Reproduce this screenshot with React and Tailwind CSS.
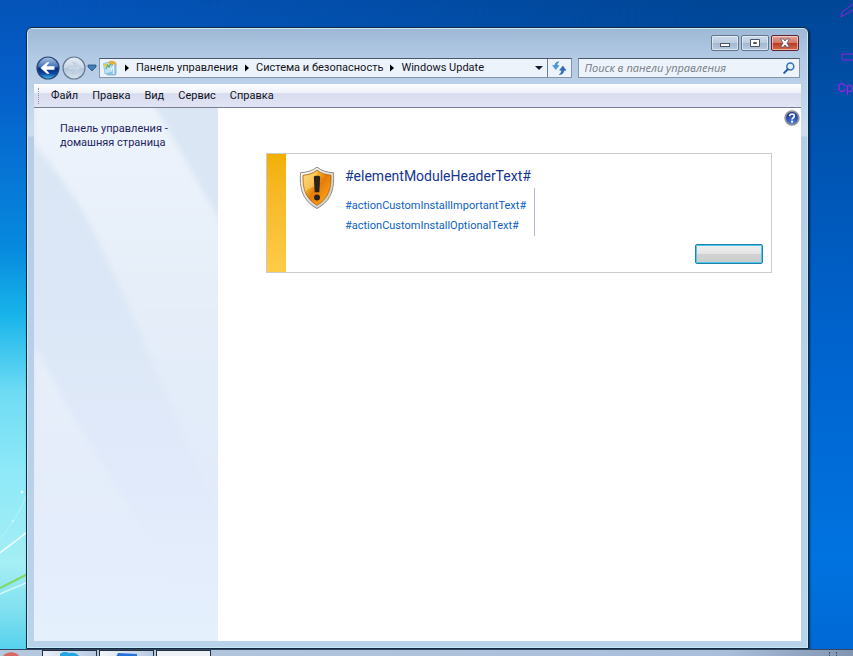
import React, { useState } from 'react';

const menuItems = ['Файл', 'Правка', 'Вид', 'Сервис', 'Справка'];
const crumbs = ['Панель управления', 'Система и безопасность', 'Windows Update'];

const Wallpaper = () => (
  <div className="absolute inset-0 bg-[linear-gradient(180deg,#004696_0%,#0052ae_20%,#0062cc_50%,#0073e0_85%,#0068d4_100%)]">
    <div className="absolute inset-0 bg-[linear-gradient(180deg,#0453b8_0%,#0561cb_15%,#078ade_38%,#18b4ea_48%,#6fdcf4_60%,#8ee9f8_72%,#a5eef5_86%,#7fe0f0_93%,#4fcfec_100%)] [mask-image:linear-gradient(90deg,#000_0%,#000_6%,transparent_85%)]" />
    <svg className="absolute bottom-0 left-0 h-44 w-7" viewBox="0 0 28 176" fill="none" aria-hidden="true">
      <path d="M0 59C10 47 20 32 28 12" stroke="#c8f8fc" strokeOpacity="0.6" />
      <path d="M0 73C10 65 19 59 28 51" stroke="#effeff" strokeWidth="1.5" />
      <path d="M0 108C10 103 18 99 28 94" stroke="#7fd860" strokeWidth="2" />
      <path d="M0 114C10 109 18 107 28 102" stroke="#d3f8fa" strokeWidth="1.5" />
      <circle cx="22" cy="12" r="1.5" fill="#e6fdff" />
      <circle cx="13" cy="41" r="1" fill="#d8fbff" />
    </svg>
  </div>
);

const DesktopShortcut = () => (
  <a href="#shortcut" className="absolute right-0 top-0 block w-4 text-[13px] text-[#a01ee0]">
    <svg className="h-20 w-4" viewBox="0 0 16 80" fill="none" stroke="#8a22d8" aria-hidden="true">
      <path d="M16 4L5 12L4 17L16 10" />
      <path d="M16 54H5V60H16" />
    </svg>
    <span className="block leading-4">Ср</span>
  </a>
);

const BackIcon = () => (
  <svg className="size-6" viewBox="0 0 24 24" aria-hidden="true">
    <defs>
      <linearGradient id="back" x1="0" y1="0" x2="0" y2="1">
        <stop offset="0" stopColor="#a9c3e6" />
        <stop offset="0.45" stopColor="#4270ba" />
        <stop offset="0.5" stopColor="#082c7c" />
        <stop offset="0.75" stopColor="#0d489f" />
        <stop offset="1" stopColor="#43c5f0" />
      </linearGradient>
    </defs>
    <circle cx="12" cy="12" r="11" fill="url(#back)" stroke="#2b4574" strokeWidth="1.2" />
    <path d="M4.5 12L11 6.2H13.6L10.2 10.2H18.5V13.8H10.2L13.6 17.8H11Z" fill="#fff" />
  </svg>
);

const ForwardIcon = () => (
  <svg className="size-6" viewBox="0 0 24 24" aria-hidden="true">
    <defs>
      <linearGradient id="forward" x1="0" y1="0" x2="0" y2="1">
        <stop offset="0" stopColor="#e4ecf5" />
        <stop offset="0.48" stopColor="#cbd8e7" />
        <stop offset="0.52" stopColor="#b3c6db" />
        <stop offset="1" stopColor="#d7e4f0" />
      </linearGradient>
    </defs>
    <circle cx="12" cy="12" r="11" fill="url(#forward)" stroke="#66788f" strokeWidth="1.2" />
    <path d="M19 12L13 6.5H10.6L14 10.3H6V13.7H14L10.6 17.5H13Z" fill="#c9d7e7" stroke="#b0c1d5" strokeWidth="0.6" />
  </svg>
);

const PanelIcon = () => (
  <svg className="size-4 shrink-0" viewBox="0 0 16 16" aria-hidden="true">
    <rect x="5" y="4" width="9" height="11" rx="1" fill="#8ec6ec" stroke="#70a8d2" strokeWidth="0.7" />
    <path d="M1.5 3.5L9 1.5L11 12L3 14Z" fill="#bfe3f2" stroke="#7ab6cf" strokeWidth="0.7" />
    <path d="M4 9L5.5 5L7 7L9 3" fill="none" stroke="#58aa6c" strokeWidth="1.2" />
    <path d="M6 2.5C9 0 13 0 15 4.5L12.5 5.5C11 3.5 9 3.2 7.5 4.5Z" fill="#e2b040" />
    <path d="M9 10L11.5 6V14" fill="none" stroke="#e8f6ff" strokeWidth="1.3" />
    <circle cx="3.5" cy="5" r="1.6" fill="#ecc83c" />
  </svg>
);

const RefreshIcon = () => (
  <svg className="size-4" viewBox="0 0 16 16" aria-hidden="true">
    <path d="M8 1.8C5.2 2 4 3.3 3.8 5.5H1.6L4.8 9.6L8 5.5H6C6 4 6.6 2.8 8 1.8Z" fill="#4a9fd8" stroke="#2e7fbd" strokeWidth="0.5" />
    <path d="M8.2 14.6C11.6 14.4 12.8 12.8 12.9 10.3H15L11.8 6L8.6 10.3H10.7C10.6 12 9.8 13.6 8.2 14.6Z" fill="#2e6fc0" stroke="#1f549f" strokeWidth="0.5" />
  </svg>
);

const SearchIcon = () => (
  <svg className="size-3" viewBox="0 0 12 12" fill="none" aria-hidden="true">
    <circle cx="7.3" cy="4.5" r="3.5" fill="#e2f0fc" stroke="#3472b4" strokeWidth="1.5" />
    <path d="M4.8 7.2L1.2 10.9" stroke="#24599c" strokeWidth="2" strokeLinecap="round" />
  </svg>
);

const HelpIcon = () => (
  <svg className="size-4" viewBox="0 0 16 16" aria-hidden="true">
    <defs>
      <radialGradient id="help" cx="0.5" cy="0.85" r="0.8">
        <stop offset="0" stopColor="#4f80e4" />
        <stop offset="1" stopColor="#172a86" />
      </radialGradient>
    </defs>
    <circle cx="8" cy="8" r="6.8" fill="url(#help)" stroke="#8f949f" strokeWidth="1.8" />
    <path d="M5.7 6.2C5.7 3.3 10.4 3.3 10.4 6C10.4 7.7 8.1 7.7 8.1 9.4" fill="none" stroke="#fff" strokeWidth="1.7" />
    <circle cx="8.1" cy="11.7" r="1.1" fill="#fff" />
  </svg>
);

const ShieldIcon = () => (
  <svg className="h-11 w-9 shrink-0" viewBox="0 0 36 44" aria-hidden="true">
    <defs>
      <linearGradient id="shield" x1="0" y1="0" x2="1" y2="1">
        <stop offset="0" stopColor="#ffd261" />
        <stop offset="0.35" stopColor="#f6a821" />
        <stop offset="0.5" stopColor="#e47c08" />
        <stop offset="0.75" stopColor="#f59512" />
        <stop offset="1" stopColor="#ffd047" />
      </linearGradient>
      <linearGradient id="rim" x1="0" y1="0" x2="1" y2="1">
        <stop offset="0" stopColor="#fff" />
        <stop offset="1" stopColor="#c4c2bd" />
      </linearGradient>
    </defs>
    <path d="M18 1.2C13 5 8 6.4 1.6 6.7C.4 22 3.2 34.5 18 42.5C32.8 34.5 35.6 22 34.4 6.7C28 6.4 23 5 18 1.2Z" fill="url(#rim)" stroke="#8f8b85" />
    <path d="M18 4.2C13.4 7.6 9 8.8 4 9.2C3.6 22 6 32.2 18 39.3C30 32.2 32.4 22 32 9.2C27 8.8 22.6 7.6 18 4.2Z" fill="url(#shield)" stroke="#a9680f" strokeWidth="0.8" />
    <path d="M5 10C10 9.6 14 8.4 18 5.3V20C12 21 8 23.6 6.3 26C5 21 4.7 15.5 5 10Z" fill="#fff3bd" fillOpacity="0.35" />
    <path d="M14.8 11C14.8 9.2 21.2 9.2 21.2 11L20.3 26.3H15.7Z" fill="#2a221b" />
    <circle cx="18" cy="31.6" r="3" fill="#2a221b" />
  </svg>
);

const CaptionButton = ({ label, danger, children }) => (
  <button
    type="button"
    aria-label={label}
    className={`flex h-4 w-7 items-center justify-center rounded-xs border shadow-[inset_0_0_0_1px_#ffffff80] ${
      danger
        ? 'border-[#5b2430] bg-[linear-gradient(180deg,#e3a196_0%,#d17768_48%,#bd3a25_52%,#d46a4b_100%)]'
        : 'border-[#62758f] bg-[linear-gradient(180deg,#ccdaea_0%,#bccde0_48%,#a3b8d0_52%,#b8cce1_100%)]'
    }`}
  >
    <svg className="h-2.5 w-3" viewBox="0 0 12 10" fill="#fff" stroke="#4b5566" aria-hidden="true">
      {children}
    </svg>
  </button>
);

const TitleBar = () => (
  <div className="flex h-6 items-end justify-end gap-0.5 pb-px pr-0.5">
    <CaptionButton label="Свернуть">
      <rect x="1.5" y="5.5" width="9" height="3" />
    </CaptionButton>
    <CaptionButton label="Развернуть">
      <path d="M1.5 1.5H10.5V8.5H1.5ZM4.5 4.5V5.5H7.5V4.5Z" fillRule="evenodd" />
    </CaptionButton>
    <CaptionButton label="Закрыть" danger>
      <path d="M1.5 1H4.5L6 3L7.5 1H10.5L8 5L10.5 9H7.5L6 7L4.5 9H1.5L4 5Z" strokeWidth="0.8" />
    </CaptionButton>
  </div>
);

const AddressBar = () => {
  const [query, setQuery] = useState('');

  return (
    <div className="flex h-8 items-center pl-0.5 pr-px">
      <button type="button" aria-label="Назад"><BackIcon /></button>
      <button type="button" aria-label="Вперед" className="ml-0.5"><ForwardIcon /></button>
      <button type="button" aria-label="Последние страницы" className="flex w-3.25 justify-end pr-0.5">
        <svg className="h-2 w-2.5" viewBox="0 0 10 8" aria-hidden="true">
          <path d="M1 1H9V3L5 7L1 3Z" fill="#3d7fb8" stroke="#24507f" strokeWidth="0.8" />
        </svg>
      </button>
      <div className="flex h-5 min-w-0 flex-[69] items-center border border-[#8794a8] border-t-[#4b5566] bg-[#edf3fa] pl-0.5">
        <PanelIcon />
        {crumbs.map((crumb) => (
          <React.Fragment key={crumb}>
            <svg className="h-2 w-4.5 shrink-0" viewBox="0 0 18 8" aria-hidden="true">
              <path d="M7 0.5L11 4L7 7.5Z" fill="#000" />
            </svg>
            <a href="#crumb" className="whitespace-nowrap">{crumb}</a>
          </React.Fragment>
        ))}
        <button type="button" aria-label="Предыдущие расположения" className="ml-auto flex h-full w-4 items-center justify-center">
          <svg className="h-1.5 w-2" viewBox="0 0 8 6" aria-hidden="true">
            <path d="M0 1H8L4 5Z" fill="#131b33" />
          </svg>
        </button>
        <button type="button" aria-label="Обновить" className="flex h-full w-6 items-center justify-center border-l border-[#6f7c90]">
          <RefreshIcon />
        </button>
      </div>
      <div className="ml-1.5 flex h-5 min-w-0 flex-[31] items-center border border-[#8794a8] border-t-[#4b5566] bg-[#edf3fa] pl-1.5 pr-1">
        <input
          type="text"
          aria-label="Поиск в панели управления"
          value={query}
          onChange={(e) => setQuery(e.target.value)}
          placeholder="Поиск в панели управления"
          className="min-w-0 flex-1 bg-transparent font-['Open_Sans',sans-serif] placeholder:italic placeholder:text-[#747a84] focus:outline-none"
        />
        <button type="button" aria-label="Найти"><SearchIcon /></button>
      </div>
    </div>
  );
};

const MenuBar = () => (
  <nav className="flex h-6 shrink-0 items-center border-b border-[#777f96] bg-[linear-gradient(180deg,#ffffff_0%,#eff1fa_38%,#d8dcef_42%,#e0e4f3_100%)] pl-1">
    <span className="h-4 border-l border-dotted border-[#8d94a8]" />
    <div className="flex gap-3.5 pl-3 pt-0.5">
      {menuItems.map((item) => (
        <button type="button" key={item}>{item}</button>
      ))}
    </div>
  </nav>
);

const Sidebar = () => (
  <aside className="relative w-46 shrink-0 bg-[linear-gradient(180deg,#dae6f4_0%,#dbe7f6_35%,#e1eafa_70%,#e5f0fd_100%)]">
    <svg className="absolute inset-0 size-full" viewBox="0 0 184 533" preserveAspectRatio="none" aria-hidden="true">
      <defs>
        <linearGradient id="sheen" x1="0" y1="0" x2="0" y2="1">
          <stop offset="0" stopColor="#f7faff" stopOpacity="0.7" />
          <stop offset="0.45" stopColor="#f2f7fc" stopOpacity="0.45" />
          <stop offset="1" stopColor="#f2f7fc" stopOpacity="0" />
        </linearGradient>
        <filter id="soften">
          <feGaussianBlur stdDeviation="3" />
        </filter>
      </defs>
      <g fill="url(#sheen)" filter="url(#soften)">
        <path d="M0 -6H118L150 50L190 120V420C150 330 110 230 70 145C45 90 20 60 0 36Z" />
        <path d="M0 238L40 310L95 400L140 480H0Z" fillOpacity="0.6" />
      </g>
    </svg>
    <a href="#home" className="relative ml-6.5 mt-3.5 block w-32 leading-3.5 text-[#1d2462]">
      Панель управления - домашняя страница
    </a>
  </aside>
);

const UpdateCard = () => (
  <section className="ml-12 mr-7.25 mt-6.75 flex h-30 border border-[#cbcbcb]">
    <div className="w-4.75 shrink-0 bg-linear-to-b from-[#f2b000] to-[#ffcb47]" />
    <div className="flex min-w-0 flex-1 flex-col pl-3.25 pr-2 pb-2">
      <div className="flex gap-2.5 pt-3">
        <ShieldIcon />
        <div>
          <h1 className="pr-1 text-sm leading-5 text-[#14358f]">#elementModuleHeaderText#</h1>
          <div className="mt-0.5 flex h-12 flex-col justify-end gap-1 border-r border-[#b9b9d5] pb-0.5 text-[#0c5fc4]">
            <a href="#important" className="leading-4">#actionCustomInstallImportantText#</a>
            <a href="#optional" className="leading-4">#actionCustomInstallOptionalText#</a>
          </div>
        </div>
      </div>
      <button
        type="button"
        aria-label="Установить обновления"
        className="ml-auto mt-auto h-5 w-17 rounded-xs border border-[#237fa8] bg-[linear-gradient(180deg,#f1f1f1_0%,#e4e4e4_48%,#d2d2d2_52%,#cccccc_100%)] shadow-[inset_0_0_0_1px_#48cbed]"
      />
    </div>
  </section>
);

const TaskBar = () => (
  <footer className="relative flex h-1.75 shrink-0 gap-0.5 overflow-hidden border-t border-[#33465e] bg-[linear-gradient(90deg,#b4c7dd_0%,#a9bedb_85%,#8195b0_100%)]">
    <div className="w-10">
      <svg className="h-1.5 w-7" viewBox="0 0 28 6" aria-hidden="true">
        <path d="M3 6C7 1 16 1 19 6Z" fill="#d66a62" />
      </svg>
    </div>
    <button type="button" aria-label="Skype" className="flex w-13.75 justify-center border-x border-t border-[#22303f] bg-[linear-gradient(90deg,#e8eff8,#b6c8e2)]">
      <svg className="h-1.5 w-6" viewBox="0 0 24 6" aria-hidden="true">
        <path d="M2 6V3C5 0 9 1 11 2C17 1 20 3 22 6Z" fill="#22a5e2" />
      </svg>
    </button>
    <button type="button" aria-label="Приложение" className="flex w-13.75 justify-center border-x border-t border-[#22303f] bg-[linear-gradient(90deg,#f2f6fb,#b6c8e2)]">
      <svg className="h-1.5 w-6" viewBox="0 0 24 6" aria-hidden="true">
        <path d="M1 6L3 2L22 3V6Z" fill="#2473dd" />
      </svg>
    </button>
    <button type="button" aria-label="Панель управления" className="w-13.75 border-x border-t border-[#22303f] bg-[#edf1f6]" />
    <span className="ml-auto mr-4 mt-0.5 h-1 w-2 border-x border-dotted border-[#42506a]" />
  </footer>
);

const App = () => (
  <div className="relative flex h-screen flex-col overflow-hidden font-['Roboto','Noto_Sans',sans-serif] text-[11px] text-[#11131c]">
    <Wallpaper />
    <DesktopShortcut />
    <main className="relative flex min-h-0 flex-1 pl-6.5 pr-11 pt-6.75">
      <div className="flex min-w-0 flex-1 flex-col rounded-t-md border border-[#142a42] bg-[linear-gradient(180deg,#9db8d5_0px,#b3cae4_30px,#bcd1e9_60px,#cbdded_100px,#cbdded_108px,#b7cde7_109px,#b9d3ea_100%)] px-1.75 pb-1.75 shadow-[inset_0_0_0_1px_#c4eaf8,1px_1px_2px_#00000080]">
        <TitleBar />
        <AddressBar />
        <MenuBar />
        <div className="flex min-h-0 flex-1 bg-white">
          <Sidebar />
          <div className="min-w-0 flex-1">
            <div className="flex justify-end pr-px pt-0.5">
              <button type="button" aria-label="Справка"><HelpIcon /></button>
            </div>
            <UpdateCard />
          </div>
        </div>
      </div>
    </main>
    <TaskBar />
  </div>
);

export default App;
